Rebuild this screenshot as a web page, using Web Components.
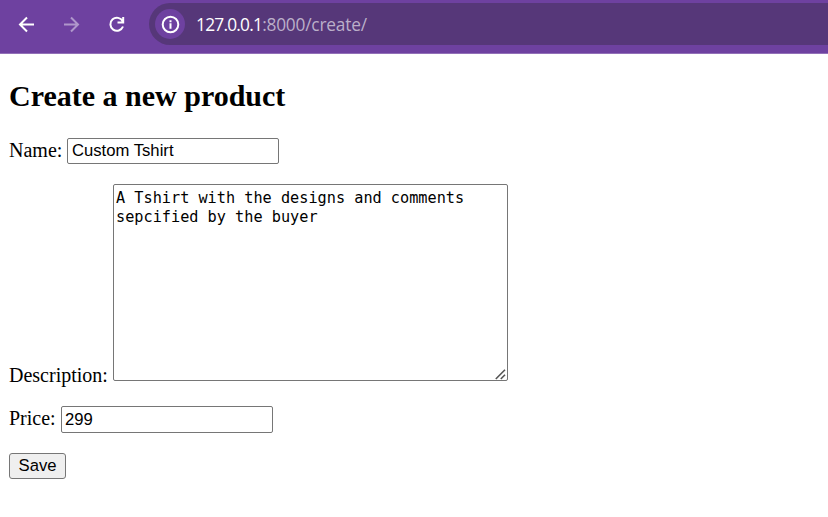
<!DOCTYPE html>
<html lang="en">
<head>
<meta charset="utf-8">
<title>Create a new product</title>
<style>
html,body{margin:0;background:#fff;height:517px;overflow:hidden}
body{font:20px/22px "Liberation Serif",serif;color:#000}
</style>
</head>
<body>
<browser-bar><span slot="host">127.0.0.1</span><span slot="path">:8000/create/</span></browser-bar>
<product-form>
  <form-field label="Name:" value="Custom Tshirt" style="--h:26px;--w:58px"></form-field>
  <form-field label="Description:" multiline value="A Tshirt with the designs and comments sepcified by the buyer" style="--h:197px;--w:104px;--mt:20px"></form-field>
  <form-field label="Price:" value="299" style="--h:27px;--w:52px;--mt:25px;--pad:3px"></form-field>
  <save-button>Save</save-button>
</product-form>
<script>
class BrowserBar extends HTMLElement{
  constructor(){super();this.attachShadow({mode:'open'}).innerHTML=`
<style>
:host{display:flex;box-sizing:border-box;height:54px;padding-top:3px;background:#6e41a0;border-bottom:1px solid #9270b8;font:17.3px/24px "Open Sans","Noto Sans",sans-serif}
nav{display:flex;align-items:center;height:42px;width:149px;flex:none;box-sizing:border-box;padding-left:16px;gap:24px}
svg{display:block;width:21px;height:21px;fill:none;stroke:#fff;stroke-width:2}
.address{flex:1;display:flex;align-items:center;height:42px;background:#563779;border-radius:21px 0 0 21px;padding-left:6px;white-space:nowrap}
.info{width:30px;height:30px;border-radius:50%;background:#6e41a0;display:grid;place-items:center;margin-right:11px}
.url{display:flex;padding-top:1px}
.host{color:#fff;letter-spacing:-.75px}.path{color:#bbafc9;letter-spacing:-.2px}
</style>
<nav>
<svg viewBox="0 0 21 21"><path d="M18 10.5H4M11 3.5l-7 7 7 7"/></svg>
<svg viewBox="0 0 21 21" style="opacity:.45"><path d="M3 10.5H17M10 3.5l7 7-7 7"/></svg>
<svg viewBox="0 0 21 21"><path d="M16.7 7.3A6.5 6.5 0 1 0 17 12.5M17.2 3v5.5H11.5"/></svg>
</nav>
<div class="address"><div class="info"><svg viewBox="0 0 21 21"><circle cx="10.5" cy="10.5" r="7.8"/><path d="M10.5 9.3v5.4M10.5 6.2v2"/></svg></div><div class="url"><div class="host"><slot name="host"></slot></div><div class="path"><slot name="path"></slot></div></div></div>`}
}
class ProductForm extends HTMLElement{
  constructor(){super();this.attachShadow({mode:'open'}).innerHTML=`
<style>
:host{display:flex;flex-direction:column;align-items:flex-start;padding:25px 9px 0}
h2{margin:0 0 25px;font-size:30px;line-height:34px;font-weight:bold;white-space:nowrap}
</style><h2>Create a new product</h2><slot></slot>`}
}
class FormField extends HTMLElement{
  constructor(){super();this.attachShadow({mode:'open'})}
  connectedCallback(){
    const multi=this.hasAttribute('multiline');
    this.shadowRoot.innerHTML=`
<style>
:host{display:block;margin-top:var(--mt,0)}
label{display:flex;position:relative;align-items:${multi?'flex-end':'flex-start'}}
span{width:var(--w);white-space:nowrap;${multi?'margin-bottom:-5px':'padding-top:1px'}}
input,textarea{box-sizing:border-box;height:var(--h);margin:0;border:1px solid #767676;border-radius:2px;background:#fff;color:#000;outline:0}
input{width:212px;padding:0 var(--pad,4px);font:16.67px "Liberation Sans",sans-serif}
textarea{width:395px;padding:4px 2px;font:15.22px/19px "DejaVu Sans Mono",monospace;resize:none;overflow:hidden}
svg{position:absolute;right:2px;bottom:1px;width:11px;height:11px;stroke:#555;stroke-width:1.6;fill:none}
</style><label><span></span>${multi?'<textarea spellcheck="false"></textarea><svg viewBox="0 0 11 11"><path d="M.8 10L10 .8M5.8 10L10 5.8"/></svg>':'<input type="text">'}</label>`;
    this.shadowRoot.querySelector('span').textContent=this.getAttribute('label');
    this.shadowRoot.querySelector('input,textarea').value=this.getAttribute('value');
  }
}
class SaveButton extends HTMLElement{
  constructor(){super();this.attachShadow({mode:'open'}).innerHTML=`
<style>
:host{display:block;margin-top:20px}
button{display:block;box-sizing:border-box;width:57px;height:26px;margin:0;padding:0;border:1px solid #767676;border-radius:3px;background:#efefef;color:#000;font:16.67px "Liberation Sans",sans-serif}
</style><button type="button"><slot></slot></button>`}
}
customElements.define('browser-bar',BrowserBar);
customElements.define('product-form',ProductForm);
customElements.define('form-field',FormField);
customElements.define('save-button',SaveButton);
</script>
</body>
</html>
